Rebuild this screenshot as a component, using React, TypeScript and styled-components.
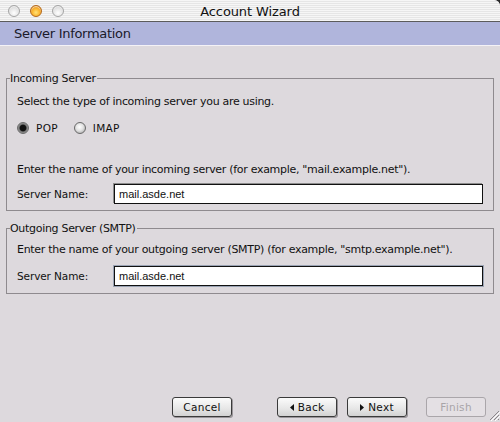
import styled, { createGlobalStyle } from "styled-components";

const GlobalStyle = createGlobalStyle`
  html, body {
    margin: 0;
    padding: 0;
    background: #2a2a2a;
  }
  * {
    box-sizing: border-box;
  }
`;

const uiFont = `"DejaVu Sans", "Liberation Sans", sans-serif`;

const ArrowLeft = () => (
  <svg width="4" height="7" viewBox="0 0 4 7">
    <path d="M4 0 L0 3.5 L4 7 Z" fill="#111" />
  </svg>
);

const ArrowRight = () => (
  <svg width="4" height="7" viewBox="0 0 4 7">
    <path d="M0 0 L4 3.5 L0 7 Z" fill="#111" />
  </svg>
);

const ResizeGrip = () => (
  <svg width="12" height="12" viewBox="0 0 12 12">
    <path d="M11 2 L2 11 M11 6 L6 11 M11 10 L10 11" stroke="#8a868a" strokeWidth="1" />
    <path d="M12 3 L3 12 M12 7 L7 12" stroke="#ffffff" strokeWidth="1" />
  </svg>
);

const App = (): JSX.Element => {
  return (
    <Window>
      <GlobalStyle />
      <TitleBar>
        <Lights>
          <Light />
          <Light $active />
          <Light />
        </Lights>
        <Title>Account Wizard</Title>
        <span />
      </TitleBar>
      <PageHeader>Server Information</PageHeader>
      <Content>
        <Group $top={26}>
          <Legend>Incoming Server</Legend>
          <Para $gap={10}>Select the type of incoming server you are using.</Para>
          <RadioRow>
            <RadioOption>
              <Radio $checked />
              POP
            </RadioOption>
            <RadioOption>
              <Radio />
              IMAP
            </RadioOption>
          </RadioRow>
          <Para $gap={27}>
            Enter the name of your incoming server (for example, "mail.example.net").
          </Para>
          <FieldRow $top={7} $bottom={6}>
            <FieldLabel>Server Name:</FieldLabel>
            <TextField value="mail.asde.net" readOnly />
          </FieldRow>
        </Group>
        <Group $top={11}>
          <Legend>Outgoing Server (SMTP)</Legend>
          <Para $gap={8}>
            Enter the name of your outgoing server (SMTP) (for example, "smtp.example.net").
          </Para>
          <FieldRow $top={9} $bottom={7}>
            <FieldLabel>Server Name:</FieldLabel>
            <TextField value="mail.asde.net" readOnly $focused />
          </FieldRow>
        </Group>
      </Content>
      <ButtonBar>
        <Button $after={45}>Cancel</Button>
        <Button $after={10}>
          <ArrowLeft />
          Back
        </Button>
        <Button $after={19}>
          <ArrowRight />
          Next
        </Button>
        <Button disabled $after={2}>
          Finish
        </Button>
        <Grip>
          <ResizeGrip />
        </Grip>
      </ButtonBar>
    </Window>
  );
};

export default App;

const Window = styled.div`
  width: 500px;
  height: 422px;
  display: flex;
  flex-direction: column;
  background: #ddd9dd;
  font-family: ${uiFont};
  color: #111;
  overflow: hidden;
  border-top-right-radius: 6px;
`;

const TitleBar = styled.div`
  height: 22px;
  flex-shrink: 0;
  display: grid;
  grid-template-columns: 1fr auto 1fr;
  align-items: center;
  background: repeating-linear-gradient(
    to bottom,
    #f6f6f6 0px,
    #f6f6f6 1px,
    #e6e6e6 1px,
    #e6e6e6 2px
  );
  border-bottom: 1px solid #5c5c5c;
`;

const Lights = styled.div`
  display: flex;
  gap: 10px;
  padding-left: 8px;
  padding-top: 1px;
`;

const Light = styled.span<{ $active?: boolean }>`
  width: 12px;
  height: 12px;
  border-radius: 50%;
  border: 1px solid ${(p) => (p.$active ? "#b2671a" : "#a4a4a4")};
  background: ${(p) =>
    p.$active
      ? "radial-gradient(circle at 50% 65%, #ffe27a 0%, #fbb630 45%, #d87a12 100%)"
      : "radial-gradient(circle at 50% 70%, #ffffff 0%, #e4e4e4 55%, #bdbdbd 100%)"};
  box-shadow: inset 0 1px 1px rgba(255, 255, 255, 0.7);
`;

const Title = styled.div`
  font-size: 13px;
  letter-spacing: -0.1px;
  color: #111;
  padding-top: 1px;
`;

const PageHeader = styled.div`
  height: 24px;
  flex-shrink: 0;
  display: flex;
  align-items: center;
  padding-left: 14px;
  font-size: 13px;
  letter-spacing: -0.3px;
  color: #1a1a2a;
  background: #b0b5dc;
  border-bottom: 1px solid #f4f2f6;
`;

const Content = styled.div`
  display: flex;
  flex-direction: column;
  padding: 0 6px 0 6px;
`;

const Group = styled.fieldset<{ $top: number }>`
  margin: ${(p) => p.$top}px 0 0 0;
  padding: 0 10px;
  border: 1px solid #8e8a8e;
  min-width: 0;
`;

const Legend = styled.legend`
  font-size: 11px;
  letter-spacing: -0.3px;
  line-height: 13px;
  padding: 0 1px 0 0;
  margin-left: -7px;
  color: #111;
`;

const Para = styled.div<{ $gap: number }>`
  margin-top: ${(p) => p.$gap}px;
  font-size: 11px;
  letter-spacing: -0.3px;
  line-height: 14px;
`;

const RadioRow = styled.div`
  display: flex;
  gap: 16px;
  height: 16px;
  margin-top: 11px;
  align-items: center;
`;

const RadioOption = styled.label`
  display: flex;
  align-items: center;
  gap: 7px;
  font-size: 10.5px;
  letter-spacing: 0.3px;
`;

const Radio = styled.span<{ $checked?: boolean }>`
  width: 12px;
  height: 12px;
  border-radius: 50%;
  border: 1px solid #6a6a6a;
  background: ${(p) =>
    p.$checked
      ? "radial-gradient(circle at 50% 50%, #111 0%, #111 40%, #777 55%, #c8c8c8 100%)"
      : "radial-gradient(circle at 45% 40%, #ffffff 0%, #e2e2e2 45%, #9a9a9a 100%)"};
`;

const FieldRow = styled.div<{ $top: number; $bottom: number }>`
  display: flex;
  align-items: center;
  margin-top: ${(p) => p.$top}px;
  margin-bottom: ${(p) => p.$bottom}px;
`;

const FieldLabel = styled.span`
  width: 97px;
  flex-shrink: 0;
  font-size: 10.5px;
  letter-spacing: -0.1px;
`;

const TextField = styled.input<{ $focused?: boolean }>`
  width: 371px;
  height: 20px;
  padding: 0 4px;
  font-family: "Liberation Sans", sans-serif;
  font-size: 11px;
  color: #111;
  background: #fff;
  border: 1px solid #111;
  outline: none;
  box-shadow: ${(p) =>
    p.$focused ? "0 0 0 1px #9aa3b4" : "-1px -1px 0 0 #8c8c8c"};
`;

const ButtonBar = styled.div`
  margin-top: auto;
  display: flex;
  justify-content: flex-end;
  align-items: flex-end;
  padding: 0 0 1px 0;
`;

const Button = styled.button<{ $after: number }>`
  height: 20px;
  width: 60px;
  margin: 0 ${(p) => p.$after}px 4px 0;
  padding: 0;
  display: flex;
  align-items: center;
  justify-content: center;
  gap: 4px;
  font-family: ${uiFont};
  font-size: 10.5px;
  letter-spacing: 0.3px;
  color: #111;
  border: 1px solid #3a3a3a;
  border-radius: 3px;
  background: linear-gradient(to bottom, #fbfbfb 0%, #e6e6e6 60%, #d2d2d2 100%);
  box-shadow: 1px 1px 0 0 #9a969a;
  &:disabled {
    color: #a8a4a8;
    border-color: #aaa6aa;
    background: #e4e0e4;
    box-shadow: none;
  }
`;

const Grip = styled.div`
  width: 12px;
  height: 12px;
  display: flex;
`;
